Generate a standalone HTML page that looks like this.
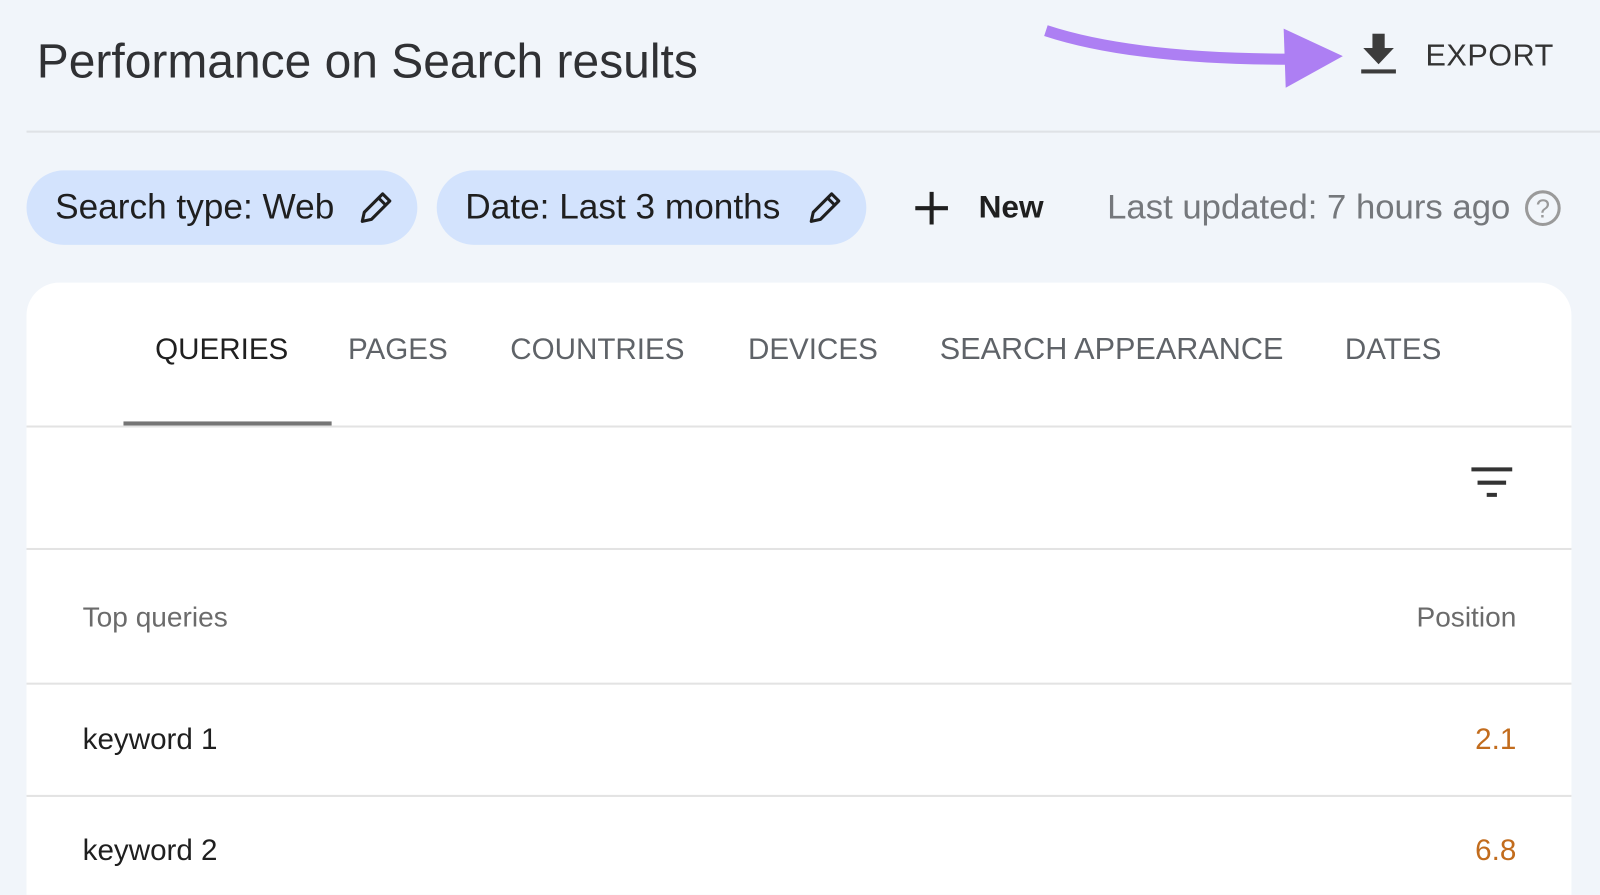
<!DOCTYPE html>
<html style="overflow:hidden;height:895px"><head><style>
body{margin:0;width:1600px;height:895px;background:#f1f5fa;font-family:"Liberation Sans",sans-serif;overflow:hidden;color:#1f1f1f;position:relative}
#w{position:absolute;left:0;top:0;width:1568px;height:877px;overflow:hidden;transform:scale(1.0204);transform-origin:0 0}
.a{position:absolute;white-space:nowrap}
.chip{position:absolute;top:167px;height:73px;background:#d3e3fd;border-radius:37px}
.card{position:absolute;left:26px;top:277px;width:1514px;height:600px;background:#fff;border-radius:32px 32px 0 0}
.tab{position:absolute;top:323px;height:40px;line-height:40px;font-size:29px;color:#5f6368}
.hl{position:absolute;left:0;width:1514px;height:2px;background:#e3e3e3}
</style></head><body><div id="w">
<div class="a" style="left:36px;top:35px;height:50px;line-height:50px;font-size:47px;color:#303134">Performance on Search results</div>
<svg class="a" style="left:1020px;top:20px" width="300" height="70"><path d="M5 10 Q90 38 245 38" stroke="#ad7ff3" stroke-width="11" fill="none"/><path d="M238 8 L296 35 L240 66 Z" fill="#ad7ff3"/></svg>
<svg class="a" style="left:1332px;top:33px" width="38" height="42"><path d="M13 0h12v14h9L19 30 4 14h9z" fill="#3c3c3c"/><rect x="2" y="35" width="34" height="4" fill="#3c3c3c"/></svg>
<div class="a" style="left:1397px;top:38px;height:34px;line-height:34px;font-size:30px;color:#333;letter-spacing:0.5px">EXPORT</div>
<div class="a" style="left:26px;top:128px;width:1574px;height:2px;background:#dfe2e6"></div>
<div class="chip" style="left:26px;width:383px"></div>
<div class="a" style="left:54px;top:184px;height:38px;line-height:38px;font-size:34.5px">Search type: Web</div>
<svg class="a" style="left:350px;top:186px" width="36" height="36"><path d="M5 31 L7 22 L25 4 L32 11 L14 29 Z" fill="none" stroke="#1f1f1f" stroke-width="3" stroke-linejoin="round"/><path d="M21 8 L28 15" stroke="#1f1f1f" stroke-width="3"/></svg>
<div class="chip" style="left:428px;width:421px"></div>
<div class="a" style="left:456px;top:184px;height:38px;line-height:38px;font-size:34.5px">Date: Last 3 months</div>
<svg class="a" style="left:790px;top:186px" width="36" height="36"><path d="M5 31 L7 22 L25 4 L32 11 L14 29 Z" fill="none" stroke="#1f1f1f" stroke-width="3" stroke-linejoin="round"/><path d="M21 8 L28 15" stroke="#1f1f1f" stroke-width="3"/></svg>
<svg class="a" style="left:895px;top:186px" width="36" height="36"><path d="M18 2v32M2 18h32" stroke="#1f1f1f" stroke-width="4"/></svg>
<div class="a" style="left:959px;top:184px;height:38px;line-height:38px;font-size:31px;font-weight:bold;color:#1f1f1f">New</div>
<div class="a" style="left:1085px;top:184px;height:38px;line-height:38px;font-size:34px;color:#75787c">Last updated: 7 hours ago</div>
<svg class="a" style="left:1493px;top:185px" width="38" height="38"><circle cx="19" cy="19" r="16" fill="none" stroke="#9a9a9a" stroke-width="3"/><text x="19" y="28" text-anchor="middle" font-size="25" fill="#9a9a9a" font-family="Liberation Sans">?</text></svg>
<div class="card">
<div class="hl" style="top:140px"></div>
<div class="a" style="left:95px;top:136px;width:204px;height:4px;background:#757575"></div>
<div class="hl" style="top:260px"></div>
<div class="hl" style="top:392px"></div>
<div class="hl" style="top:502px"></div>
<svg class="a" style="left:1414px;top:180px" width="46" height="32"><path d="M2 3h40M8 16h28M17 28h10" stroke="#333" stroke-width="4"/></svg>
<div class="a" style="left:55px;top:312px;height:32px;line-height:32px;font-size:27.5px;color:#6b6b6b">Top queries</div>
<div class="a" style="right:54px;top:312px;height:32px;line-height:32px;font-size:27.5px;color:#6b6b6b">Position</div>
<div class="a" style="left:55px;top:431px;height:34px;line-height:34px;font-size:29px">keyword 1</div>
<div class="a" style="right:54px;top:431px;height:34px;line-height:34px;font-size:29px;color:#c26c1d">2.1</div>
<div class="a" style="left:55px;top:540px;height:34px;line-height:34px;font-size:29px">keyword 2</div>
<div class="a" style="right:54px;top:540px;height:34px;line-height:34px;font-size:29px;color:#c26c1d">6.8</div>
</div>
<div class="tab" style="left:152px;color:#1f1f1f">QUERIES</div>
<div class="tab" style="left:341px">PAGES</div>
<div class="tab" style="left:500px">COUNTRIES</div>
<div class="tab" style="left:733px">DEVICES</div>
<div class="tab" style="left:921px;font-size:30px">SEARCH APPEARANCE</div>
<div class="tab" style="left:1318px">DATES</div>
</div></body></html>
